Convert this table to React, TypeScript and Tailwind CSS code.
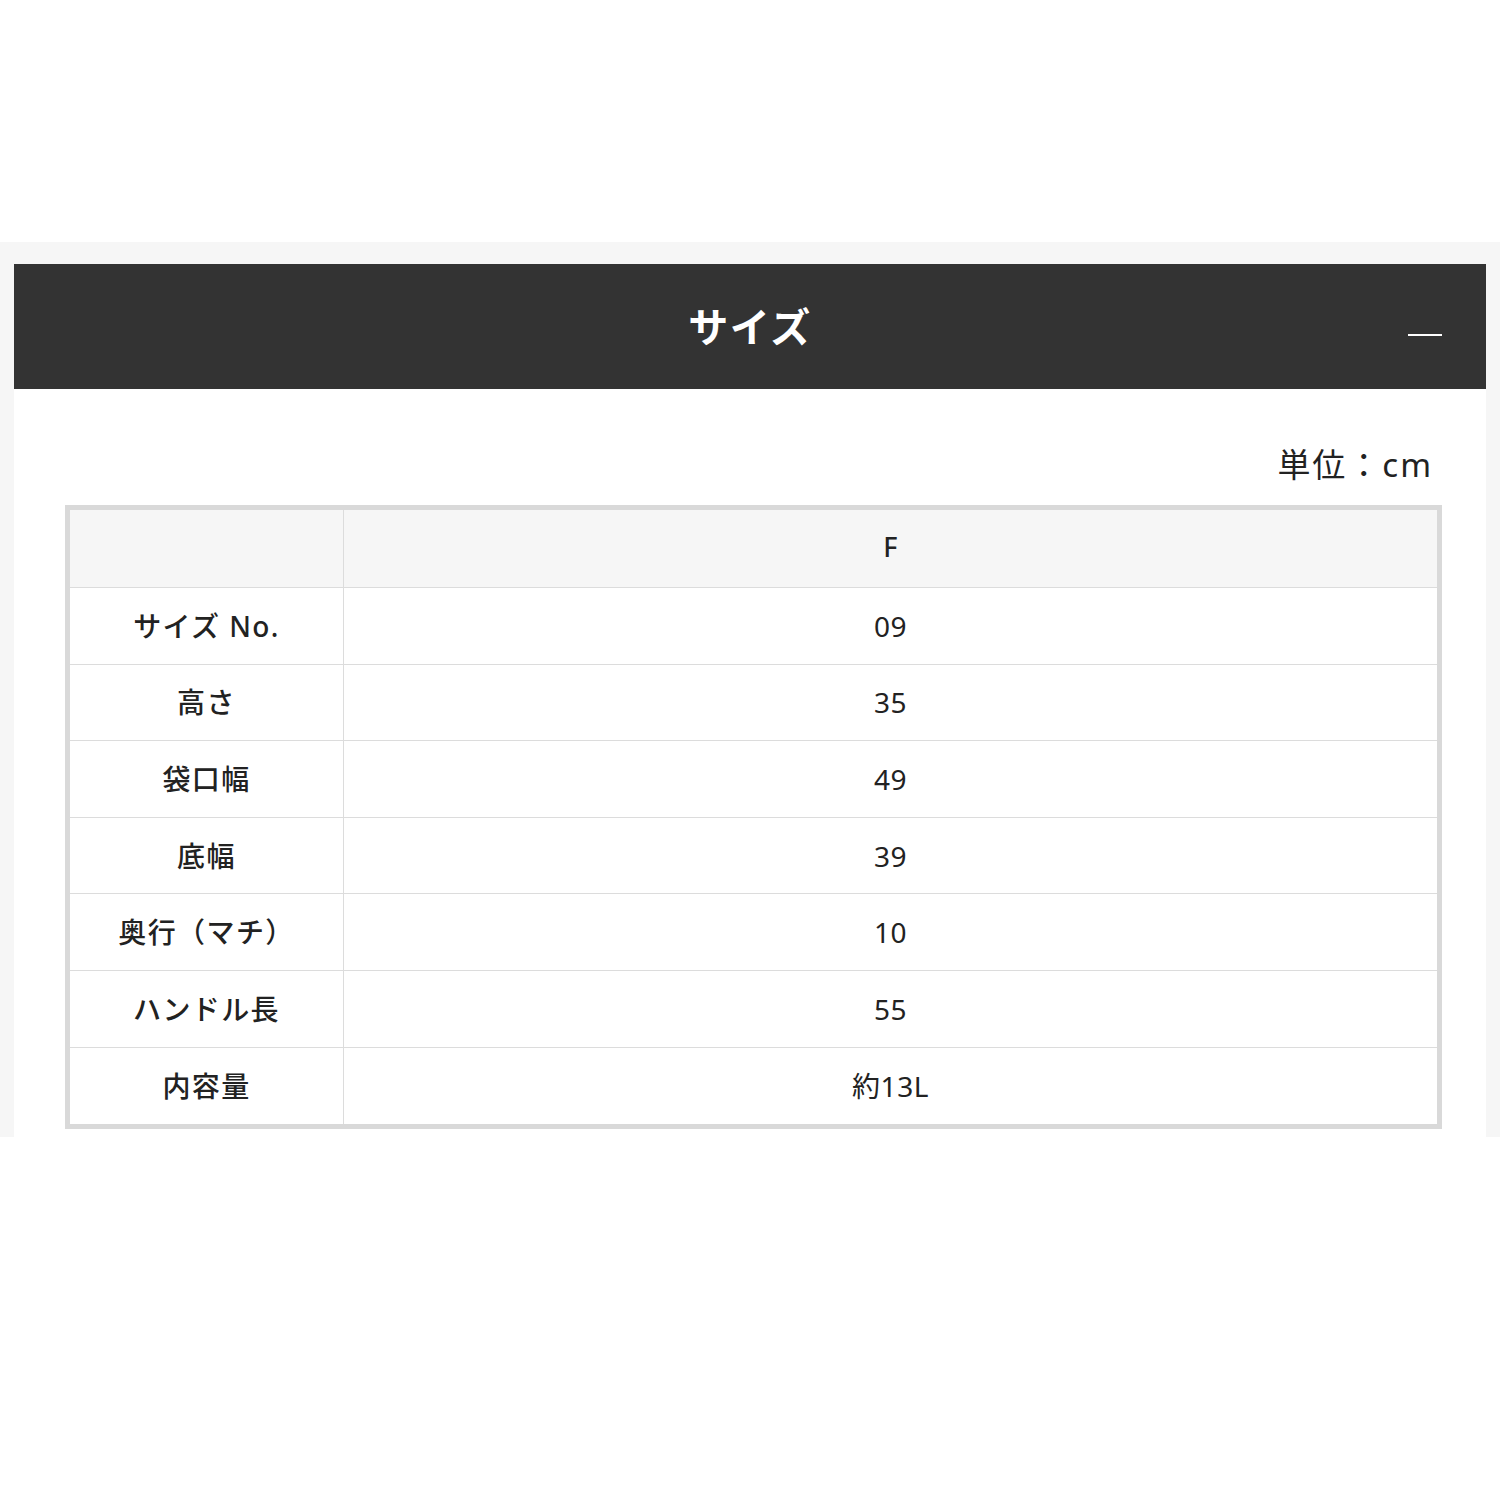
const rows: [string, string][] = [
  ['サイズ No.', '09'],
  ['高さ', '35'],
  ['袋口幅', '49'],
  ['底幅', '39'],
  ['奥行（マチ）', '10'],
  ['ハンドル長', '55'],
  ['内容量', '約13L'],
];

export default function App() {
  return (
    <div
      className="min-h-[1500px] bg-white pt-[242px] text-[#222]"
      style={{ fontFamily: '"Noto Sans", "Noto Sans CJK JP", sans-serif' }}
    >
      <div className="bg-[#f6f6f6] px-[14px] pt-[22px]">
        {/* Header */}
        <div className="relative flex h-[125px] items-center justify-center bg-[#333333]">
          <h2 className="text-[40px] font-bold tracking-[0.04em] text-white">サイズ</h2>
          <span className="absolute right-[44px] top-[70px] h-[2px] w-[34px] bg-white" />
        </div>

        {/* Body */}
        <div className="bg-white pb-[8px] pl-[51px] pr-[44px] pt-[52px]">
          <p className="mb-[16px] pr-[9px] text-right text-[33px] leading-[48px] tracking-[0.06em]">単位：cm</p>
          <table className="w-full border-collapse border-[5px] border-[#d9d9d9]">
            <thead>
              <tr className="h-[80px] bg-[#f6f6f6]">
                <th className="w-[276px] border border-[#dcdcdc]" />
                <th className="border border-[#dcdcdc] pb-[2px] text-[27px] font-medium">F</th>
              </tr>
            </thead>
            <tbody>
              {rows.map(([label, value], i) => (
                <tr key={label} className={i === rows.length - 1 ? 'h-[79.6px]' : 'h-[76.6px]'}>
                  <td className="border border-[#dcdcdc] text-center text-[28px] font-medium tracking-[0.05em]">{label}</td>
                  <td className="border border-[#dcdcdc] text-center text-[28px] tracking-[0.02em]">{value}</td>
                </tr>
              ))}
            </tbody>
          </table>
        </div>
      </div>
    </div>
  );
}
